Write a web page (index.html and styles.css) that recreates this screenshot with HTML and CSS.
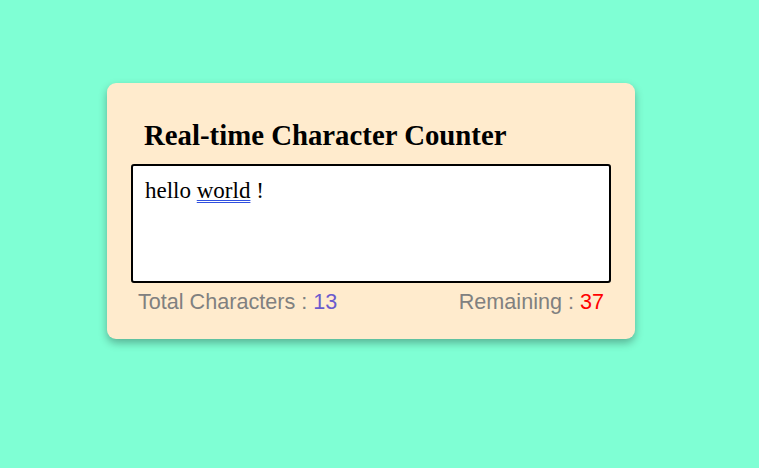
FILE: index.html
```html
<!DOCTYPE html>
<html>
<head>
<meta charset="utf-8">
<link rel="stylesheet" href="styles.css">
</head>
<body>
<div class="card">
  <h2 class="title">Real-time Character Counter</h2>
  <div class="input">hello <span class="flag">world</span> !</div>
  <div class="stats">
    <span class="stat">Total Characters : <span class="total">13</span></span>
    <span class="stat">Remaining : <span class="remain">37</span></span>
  </div>
</div>
</body>
</html>
```
FILE: styles.css
```css
html, body {
  margin: 0;
  padding: 0;
  background: #7fffd4;
  height: 100%;
}
body {
  padding: 83px 0 0 107px;
  box-sizing: border-box;
}
.card {
  width: 528px;
  box-sizing: border-box;
  background: #ffebcd;
  border-radius: 9px;
  padding: 24px 24px 25px;
  box-shadow: 0 4px 8px rgba(0, 0, 0, 0.3);
}
.title {
  font-family: "Liberation Serif", serif;
  font-size: 28.8px;
  font-weight: bold;
  line-height: 33px;
  margin: 12px 0 12px 13px;
  color: #000;
}
.input {
  height: 119px;
  box-sizing: border-box;
  background: #fff;
  border: 2px solid #000;
  border-radius: 3px;
  padding: 11px 12px;
  font-family: "Liberation Serif", serif;
  font-size: 23px;
  line-height: 27px;
  color: #000;
}
.flag {
  text-decoration: underline double #3050e0;
  text-decoration-thickness: 1px;
  text-underline-offset: 2px;
}
.stats {
  display: flex;
  justify-content: space-between;
  padding: 0 7px;
  margin-top: 6px;
  font-family: "Liberation Sans", Arial, sans-serif;
  font-size: 21.6px;
  line-height: 25px;
  color: #808080;
}
.total { color: #6a5acd; }
.remain { color: #ff0000; }
```
